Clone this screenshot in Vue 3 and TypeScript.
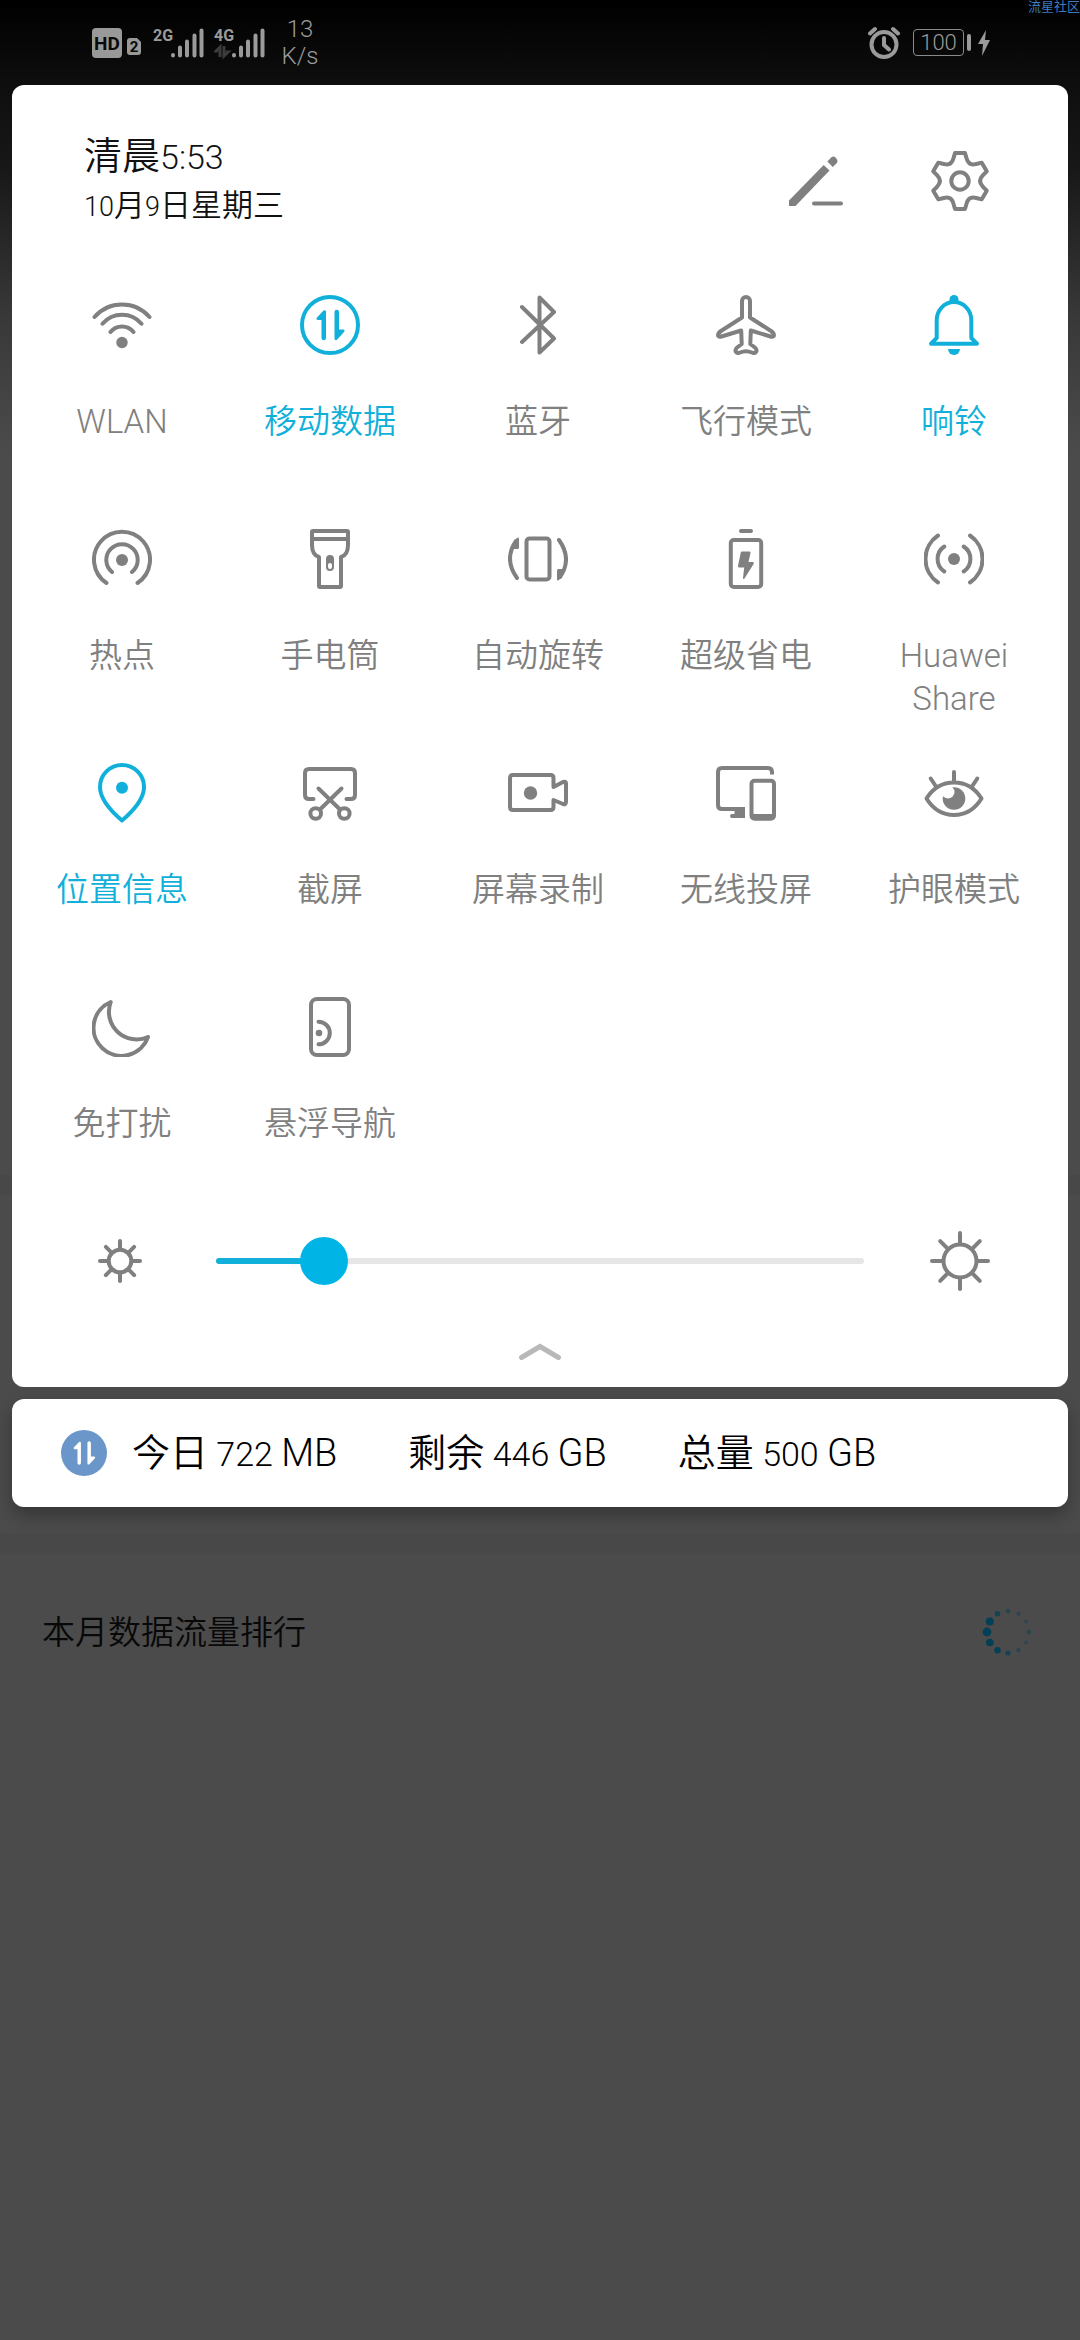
<script setup lang="ts">
import { computed, ref } from 'vue'

interface Tile {
  label: string
  active?: boolean
  svg: string
}

const ARROWS =
  '<g class="solid"><path d="M26 16.500 V43 a2 2 0 0 1 -4.500 0 V25 H18 q-2.500 -.4 -1 -2.600 L23.500 15.600 q2 -1 2.500 .9Z"/><path d="M34.500 44 V17 a2 2 0 0 1 4.500 0 V34.500 H43 q2.500 .4 1 2.600 L37 44.800 q-2 1 -2.500 -.8Z"/></g>'

const TURN =
  '<path d="M9 49Q-4.500 30 8 12"/><path class="solid" d="M11 9.500V18.500Q11 20 9.500 20H4Q6 13 8.500 9.500Q10.500 7.500 11 9.500Z"/>'

const tiles = ref<Tile[]>([
  {
    label: 'WLAN',
    svg: '<path d="M2.500 22A36.500 36.500 0 0 1 57.500 22M10.500 28.700A25.600 25.600 0 0 1 49.500 28.700M18.500 37A14.800 14.800 0 0 1 41.500 37"/><circle class="solid" cx="30" cy="47.500" r="5.700"/>',
  },
  { label: '移动数据', active: true, svg: '<circle cx="30" cy="30" r="28"/>' + ARROWS },
  { label: '蓝牙', svg: '<path d="M14 12L46 43.500L31.500 57.500V2.500L46 17L14 47"/>' },
  {
    label: '飞行模式',
    svg: '<path d="M26 22.500V6a4 4 0 0 1 8 0V22.500L55 36Q58.500 38.500 57.800 41Q57 42.300 54.500 41.500L34.800 35.500L34.300 49L39.500 53Q41.500 56 39.500 57.500Q38 58.500 36 57.500Q30 54.800 24 57.500Q22 58.500 20.500 57.500Q18.500 56 20.500 53L25.700 49L25.200 35.500L5.500 41.500Q3 42.300 2.200 41Q1.500 38.500 5 36Z"/>',
  },
  {
    label: '响铃',
    active: true,
    svg: '<circle class="solid" cx="30" cy="4.500" r="4.500"/><path d="M7 48.700L12.700 43V25a17.300 18 0 0 1 34.600 0V43L53 48.700Z"/><path class="solid" d="M24 54H36A6 6 0 0 1 24 54Z"/>',
  },
  {
    label: '热点',
    svg: '<path d="M14.500 54A28 28 0 1 1 45.500 54M20 43A15.700 15.700 0 1 1 40 43"/><circle class="solid" cx="30" cy="31" r="6"/>',
  },
  {
    label: '手电筒',
    svg: '<path d="M13 2H47Q48 2 48 3V16Q48 26 41 28V57Q41 58 40 58H20Q19 58 19 57V28Q12 26 12 16V3Q12 2 13 2ZM12 10H48"/><path class="solid" d="M26 35V30a4 4 0 0 1 8 0V35Z"/><rect x="27" y="33" width="6" height="8" rx="3" stroke-width="2" fill="#fff"/>',
  },
  {
    label: '自动旋转',
    svg:
      '<rect x="18.500" y="9.500" width="23" height="41" rx="3"/>' +
      TURN +
      '<g transform="rotate(180 30 30)">' +
      TURN +
      '</g>',
  },
  {
    label: '超级省电',
    svg: '<path d="M25 2H35"/><rect x="14.800" y="11" width="30.400" height="47" rx="3"/><path class="solid" d="M26 22.500H33.500Q34.800 22.500 34.500 24L32.500 33H37Q38.500 33.300 37.600 35L28.500 49.500Q27 50.800 27 49L28.200 38.500H23Q21.800 38.300 22 37L24.700 23.700Q25 22.500 26 22.500Z"/>',
  },
  {
    label: 'Huawei Share',
    svg: '<circle class="solid" cx="30" cy="30" r="6"/><path d="M14 6.500A28.300 28.300 0 0 0 14 53.500M46 6.500A28.300 28.300 0 0 1 46 53.500M20.300 17.500A15 15 0 0 0 20.300 42.500M39.700 17.500A15 15 0 0 1 39.700 42.500"/>',
  },
  {
    label: '位置信息',
    active: true,
    svg: '<circle class="solid" cx="30" cy="24.700" r="6"/><path d="M30 57.500C20 49 8 36 8 24a22 22 0 0 1 44 0C52 36 40 49 30 57.500Z"/>',
  },
  {
    label: '截屏',
    svg: '<path d="M13.500 36H9Q5 36 5 32V10Q5 6 9 6H51Q55 6 55 10V32Q55 36 51 36H46.500M18.500 25.500L40 46.500M41.500 25.500L20 46.500"/><circle cx="15.700" cy="50.500" r="5.300"/><circle cx="44.300" cy="50.500" r="5.300"/>',
  },
  {
    label: '屏幕录制',
    svg: '<path d="M45.500 24L55 19Q58 18 58 20.500V39Q58 42 55 41L45.500 37V44Q45.500 47 42.500 47H5Q2 47 2 44V15Q2 12 5 12H42.500Q45.500 12 45.500 15Z"/><circle class="solid" cx="22.500" cy="30" r="6.700"/>',
  },
  {
    label: '无线投屏',
    svg: '<path stroke-linecap="butt" d="M56 11.500V9Q56 5 52 5H6Q2 5 2 9V42Q2 46 6 46H29"/><path class="solid" d="M18.500 45H29V55H16Q14 55 14 53Q14 51 16 51H18.500Z"/><rect x="35.500" y="17.700" width="22.500" height="38" rx="3"/><path class="solid" d="M35.500 51H58V56H35.500Z"/>',
  },
  {
    label: '护眼模式',
    svg: '<path d="M2.500 35.500C9 25 19 19.500 30 19.500S51 25 57.500 35.500C51 46 41 52 30 52S9 46 2.500 35.500ZM30 9V18M6.700 15.500L12 23.500M53.300 15.500L48 23.500"/><circle class="solid" cx="30" cy="35.500" r="11.300"/><circle cx="24" cy="29" r="6.500" stroke="none" fill="#fff"/>',
  },
  { label: '免打扰', svg: '<path d="M18.700 5A28 28 0 1 0 56 40A27.700 27.700 0 0 1 18.700 5Z"/>' },
  {
    label: '悬浮导航',
    svg: '<rect x="11" y="2" width="38" height="56" rx="6"/><path d="M18.500 24.700A11.300 11.300 0 0 1 18.500 47.300"/><circle class="solid" cx="19" cy="36" r="3.300"/>',
  },
])

const brightness = ref(14)
// The thumb is 48px wide, so its centre runs from 24px to 100% - 24px.
const fillStyle = computed(() => ({
  '--fill': `calc(24px + (100% - 48px) * ${brightness.value / 100})`,
}))

const turn = (x: number, y: number, deg: number): string => {
  const a = (deg * Math.PI) / 180
  const px = 30 + x * Math.cos(a) - y * Math.sin(a)
  const py = 30 + x * Math.sin(a) + y * Math.cos(a)
  return `${px.toFixed(2)} ${py.toFixed(2)}`
}

const gearPath =
  [0, 60, 120, 180, 240, 300]
    .map((d, i) => {
      const n = d + 60
      return (
        `${i ? 'L' : 'M'}${turn(-5, -28, d)}L${turn(5, -28, d)}L${turn(6.6, -22.5, d)}` +
        `C${turn(8, -17.5, d)} ${turn(-8, -17.5, n)} ${turn(-6.6, -22.5, n)}`
      )
    })
    .join('') + 'Z'

const rays = [0, 45, 90, 135, 180, 225, 270, 315]

const usage = [
  { name: '今日', amount: '722', unit: 'MB' },
  { name: '剩余', amount: '446', unit: 'GB' },
  { name: '总量', amount: '500', unit: 'GB' },
]

const dotSizes = [2.2, 2.1, 2, 2.2, 2, 2.1, 2.6, 3.2, 3.8, 4.4, 4, 2.7]
const dots = dotSizes.map((r, i) => {
  const a = (i * Math.PI) / 6
  return { x: 26 + 21 * Math.sin(a), y: 26 - 21 * Math.cos(a), r, o: Math.min(1, r / 2 - 0.6) }
})
</script>

<template>
  <main class="page">
    <span class="watermark">流星社区</span>
    <header class="status">
      <div class="status-left">
        <svg class="hd" width="50" height="32" viewBox="0 0 50 32">
          <rect y="1" width="30" height="30" rx="4" />
          <path d="M35 14q0-3 3-3h7l4 4v10q0 3-3 3h-8q-3 0-3-3z" />
          <text x="15" y="23" font-size="19">HD</text>
          <text x="42" y="25" font-size="15">2</text>
        </svg>
        <svg class="signal" width="52" height="44" viewBox="0 -6 52 44">
          <text x="0" y="14">2G</text>
          <path d="M20 28.500V28M27 28.500V20.500M34 28.500V14.500M41.500 28.500V8.500M48.500 28.500V3.500" />
        </svg>
        <svg class="signal" width="52" height="44" viewBox="0 -6 52 44">
          <text x="0" y="14">4G</text>
          <path class="faint" d="M6 30V20L2 24H4M10 19V29L14 25H12" />
          <path d="M20 28.500V28M27 28.500V20.500M34 28.500V14.500M41.500 28.500V8.500M48.500 28.500V3.500" />
        </svg>
        <p class="speed">13<br />K/s</p>
      </div>
      <div class="status-right">
        <svg width="32" height="34" viewBox="0 0 32 34" class="alarm">
          <circle cx="16" cy="18.500" r="12.500" />
          <path d="M16 12V19L21 23.500M2 7.500L7 3M30 7.500L25 3" />
        </svg>
        <div class="battery"><span>100</span></div>
        <i class="nub"></i>
        <svg width="12" height="26" viewBox="0 0 12 26" class="bolt"><path d="M8 0L0 14H5L4 26L12 10H7Z" /></svg>
      </div>
    </header>

    <section class="panel">
      <div class="head">
        <div class="clock">
          <p class="time">清晨<span>5:53</span></p>
          <p class="date"><span>10</span>月<span>9</span>日星期三</p>
        </div>
        <div class="tools">
          <button type="button" aria-label="编辑">
            <svg class="icon" viewBox="0 0 60 60">
              <path class="solid" d="M3 49.500L37.700 14L43.500 19.500L9.500 55H3Z" />
              <path class="solid" d="M41.300 10.500L45.500 6.200Q47.500 4.500 50 7Q52.500 10 50.800 12L46.800 16Z" />
              <path d="M28 52.500H55" />
            </svg>
          </button>
          <button type="button" aria-label="设置">
            <svg class="icon" viewBox="0 0 60 60">
              <path :d="gearPath" />
              <circle cx="30" cy="30" r="8.700" />
            </svg>
          </button>
        </div>
      </div>

      <div class="tiles">
        <button
          v-for="tile in tiles"
          :key="tile.label"
          type="button"
          class="tile"
          :class="{ active: tile.active }"
          :aria-pressed="!!tile.active"
          @click="tile.active = !tile.active"
        >
          <svg class="icon" viewBox="0 0 60 60" v-html="tile.svg"></svg>
          <span>{{ tile.label }}</span>
        </button>
      </div>

      <div class="brightness">
        <svg class="icon" viewBox="0 0 60 60">
          <circle cx="30" cy="30" r="11.300" />
          <path v-for="r in rays" :key="r" d="M30 17V10" :transform="`rotate(${r} 30 30)`" />
        </svg>
        <input v-model.number="brightness" type="range" min="0" max="100" aria-label="亮度" :style="fillStyle" />
        <svg class="icon" viewBox="0 0 60 60">
          <circle cx="30" cy="30" r="16.500" />
          <path v-for="r in rays" :key="r" d="M30 12V2" :transform="`rotate(${r} 30 30)`" />
        </svg>
      </div>

      <button type="button" class="collapse" aria-label="收起">
        <svg width="44" height="20" viewBox="0 0 44 20"><path d="M3.500 16.500L22 5.500L40.500 16.500" /></svg>
      </button>
    </section>

    <section class="usage">
      <svg class="badge" viewBox="0 0 60 60">
        <circle cx="30" cy="30" r="30" />
        <g v-html="ARROWS"></g>
      </svg>
      <p v-for="u in usage" :key="u.name">
        {{ u.name }}<span class="num">&nbsp;{{ u.amount }}&nbsp;</span>{{ u.unit }}
      </p>
    </section>

    <div class="divider"></div>
    <section class="ranking">
      <h2>本月数据流量排行</h2>
      <svg width="52" height="52" viewBox="0 0 52 52">
        <circle v-for="(d, i) in dots" :key="i" :cx="d.x" :cy="d.y" :r="d.r" :opacity="d.o" />
      </svg>
    </section>
  </main>
</template>

<style>
body {
  background: #4b4b4b;
}
</style>

<style scoped>
.page {
  position: relative;
  min-height: 100vh;
  background: linear-gradient(
    #000 0,
    #0e0e0e 85px,
    #181818 170px,
    #383838 315px,
    #4b4b4b 450px,
    #4b4b4b 1175px,
    #484848 1175px,
    #484848 1195px,
    #4b4b4b 1195px
  );
  font-family: 'Roboto', 'Noto Sans CJK SC', sans-serif;
  font-weight: 350;
  overflow: hidden;
}
p,
h2 {
  margin: 0;
  font-weight: inherit;
}
button {
  margin: 0;
  padding: 0;
  border: 0;
  background: none;
  font: inherit;
  color: inherit;
  cursor: pointer;
}
svg {
  display: block;
  flex: none;
}
.watermark {
  position: absolute;
  top: 0;
  right: 0;
  font-size: 13px;
  line-height: 14px;
  font-weight: 400;
  color: #3c7cc0;
}

.status {
  display: flex;
  justify-content: space-between;
  box-sizing: border-box;
  height: 85px;
  padding: 0 90px 0 92px;
  color: #9b9b9b;
}
.status-left,
.status-right {
  display: flex;
  align-items: center;
}
.hd {
  margin-right: 11px;
  fill: #999;
}
.hd text {
  fill: #0a0a0a;
  font-weight: 700;
  text-anchor: middle;
}
.signal {
  margin-right: 9px;
  fill: none;
  stroke: #9b9b9b;
  stroke-width: 4;
  stroke-linecap: round;
}
.signal text {
  fill: #9b9b9b;
  stroke: none;
  font-size: 16px;
  font-weight: 700;
}
.signal .faint {
  stroke: #3c3c3c;
  stroke-width: 3;
  stroke-linecap: butt;
}
.speed {
  width: 50px;
  font-size: 24px;
  line-height: 27px;
  text-align: center;
}
.alarm {
  margin-right: 13px;
  fill: none;
  stroke: #9b9b9b;
  stroke-width: 4;
  stroke-linecap: round;
}
.battery {
  display: flex;
  align-items: center;
  justify-content: center;
  box-sizing: border-box;
  width: 51px;
  height: 27px;
  border: 1px solid #8a8a8a;
  border-radius: 4px;
  font-size: 22px;
  line-height: 24px;
}
.nub {
  width: 4px;
  height: 17px;
  margin: 0 7px 0 3px;
  border-radius: 2px;
  background: #9b9b9b;
}
.bolt {
  fill: #9b9b9b;
}

.panel,
.usage {
  margin: 0 12px;
  border-radius: 12px;
  background: #fff;
}
.panel {
  padding-top: 46px;
}
.head {
  display: flex;
  align-items: center;
  justify-content: space-between;
  padding: 0 78px 0 72px;
  color: #111;
}
.time,
.date {
  line-height: 50px;
}
.time {
  font-size: 38px;
}
.date {
  font-size: 31px;
}
.time span,
.num {
  font-size: 34px;
  line-height: 1;
}
.date span {
  font-size: 27px;
  line-height: 1;
}
.tools {
  display: flex;
  gap: 84px;
}
.icon {
  width: 60px;
  height: 60px;
  fill: none;
  stroke: #808080;
  stroke-width: 4;
  stroke-linecap: round;
  stroke-linejoin: round;
}
.icon :deep(.solid) {
  fill: #808080;
  stroke: none;
}
.tiles {
  display: grid;
  grid-template-columns: repeat(5, minmax(0, 1fr));
  grid-auto-rows: 234px;
  margin-top: 64px;
  padding: 0 10px 0 6px;
}
.tile {
  display: flex;
  flex-direction: column;
  align-items: center;
  gap: 45px;
  padding: 0 36px;
  font-size: 33px;
  line-height: 43px;
  color: #808080;
}
.tile.active {
  color: #10b0da;
}
.tile.active .icon {
  stroke: #10b0da;
}
.tile.active .icon :deep(.solid) {
  fill: #10b0da;
}

.brightness {
  display: flex;
  align-items: center;
  gap: 66px;
  padding: 0 78px;
}
.brightness input {
  flex: 1;
  min-width: 0;
  height: 48px;
  margin: 0;
  appearance: none;
  background: none;
}
.brightness input::-webkit-slider-runnable-track {
  height: 6px;
  border-radius: 3px;
  background: linear-gradient(90deg, #10b0da var(--fill), #e6e6e6 var(--fill));
}
.brightness input::-webkit-slider-thumb {
  appearance: none;
  width: 48px;
  height: 48px;
  margin-top: -21px;
  border-radius: 50%;
  background: #00b5e5;
}
.collapse {
  display: flex;
  align-items: center;
  justify-content: center;
  box-sizing: border-box;
  width: 100%;
  height: 96px;
  padding-top: 24px;
}
.collapse path {
  fill: none;
  stroke: #b8b8b8;
  stroke-width: 5;
  stroke-linecap: round;
}

.usage {
  display: flex;
  align-items: center;
  gap: 71px;
  height: 108px;
  margin-top: 12px;
  padding: 0 49px;
  box-shadow: 0 8px 18px rgba(0, 0, 0, 0.3);
  font-size: 38px;
  line-height: 50px;
  color: #000;
  white-space: nowrap;
}
.badge {
  width: 46px;
  height: 46px;
  margin-right: -46px;
  fill: #6b96c9;
}
.badge :deep(.solid) {
  fill: #fff;
}
.divider {
  height: 21px;
  margin-top: 26px;
  background: #484848;
}
.ranking {
  display: flex;
  align-items: center;
  justify-content: space-between;
  height: 156px;
  padding: 0 46px 0 42px;
  color: #080808;
}
.ranking h2 {
  font-size: 33px;
  line-height: 43px;
}
.ranking svg {
  fill: #033f56;
}
</style>
